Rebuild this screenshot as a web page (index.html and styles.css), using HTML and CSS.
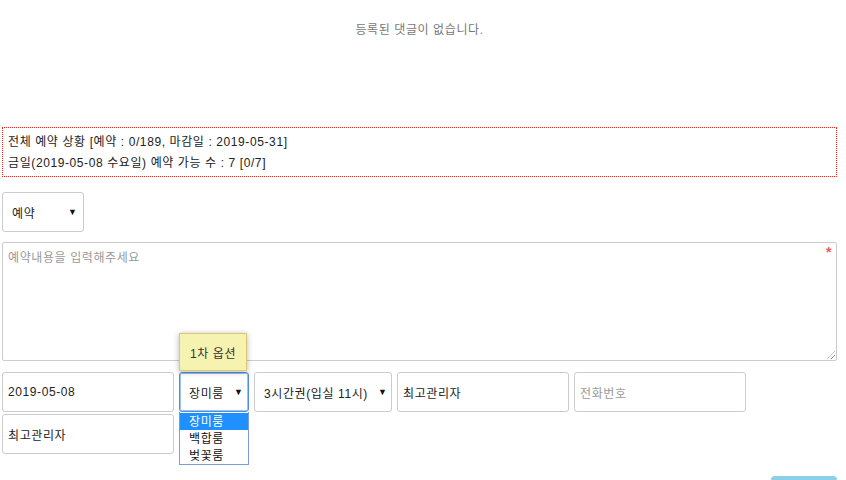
FILE: index.html
```html
<!DOCTYPE html>
<html lang="ko">
<head>
<meta charset="utf-8">
<link rel="stylesheet" href="styles.css">
</head>
<body>
<div class="page">
  <div class="no-comment">등록된 댓글이 없습니다.</div>

  <div class="status">
    <div>전체 예약 상황 [예약 : 0/189, 마감일 : 2019-05-31]</div>
    <div>금일(2019-05-08 수요일) 예약 가능 수 : 7 [0/7]</div>
  </div>

  <div class="sel sel-type"><span>예약</span><i class="arrow">▼</i></div>

  <div class="ta-wrap">
    <div class="textarea">예약내용을 입력해주세요</div>
    <span class="req">*</span>
    <span class="grip"></span>
  </div>

  <div class="fields">
    <div class="inp">2019-05-08</div>
    <div class="room-wrap">
      <div class="sel sel-room focus"><span>장미룸</span><i class="arrow">▼</i></div>
      <div class="tip">1차 옵션</div>
      <ul class="dropdown">
        <li class="on">장미룸</li>
        <li>백합룸</li>
        <li>벚꽃룸</li>
      </ul>
    </div>
    <div class="sel sel-time"><span>3시간권(입실 11시)</span><i class="arrow">▼</i></div>
    <div class="inp">최고관리자</div>
    <div class="inp ph">전화번호</div>
    <div class="inp">최고관리자</div>
  </div>

  <div class="actions"><div class="btn"></div></div>
</div>
</body>
</html>
```
FILE: styles.css
```css
html { overflow: hidden; }
body {
  margin: 0;
  font-family: "Liberation Sans", "Noto Sans CJK KR", sans-serif;
  font-size: 12px;
  letter-spacing: 0.6px;
  color: #222;
  background: #fff;
}
.page { width: 835px; padding: 0 9px 0 2px; }

.no-comment {
  text-align: center;
  color: #777;
  line-height: 16px;
  padding: 22px 0 0 0;
  height: 105px;
}

.status {
  border: 1px dotted #f22;
  padding: 4px 5px 2px 5px;
  line-height: 21px;
  height: 42px;
}

.sel {
  box-sizing: border-box;
  height: 40px;
  border: 1px solid #ccc;
  border-radius: 3px;
  display: flex;
  align-items: center;
  justify-content: space-between;
  background: #fff;
}
.arrow {
  font-style: normal;
  font-size: 9px;
  letter-spacing: 0;
  color: #111;
}
.sel-type {
  width: 82px;
  margin-top: 15px;
  padding: 0 6px 0 9px;
}

.ta-wrap { position: relative; margin-top: 10px; }
.textarea {
  box-sizing: border-box;
  width: 835px;
  height: 119px;
  border: 1px solid #ccc;
  border-radius: 2px;
  padding: 7px 5px;
  line-height: 16px;
  color: #999;
}
.req {
  position: absolute;
  right: 5px;
  top: 2px;
  color: #f55;
  font-size: 14px;
  font-weight: bold;
}
.grip {
  position: absolute;
  right: 2px;
  bottom: 2px;
  width: 8px;
  height: 8px;
  background: repeating-linear-gradient(135deg, transparent 0 2px, #888 2px 3px);
  clip-path: polygon(100% 0, 100% 100%, 0 100%);
}

.fields {
  margin-top: 11px;
  display: flex;
  flex-wrap: wrap;
  column-gap: 5px;
  row-gap: 2px;
}
.inp {
  box-sizing: border-box;
  width: 172px;
  height: 40px;
  border: 1px solid #ccc;
  border-radius: 3px;
  padding: 0 5px;
  display: flex;
  align-items: center;
}
.inp.ph { color: #999; }

.room-wrap { position: relative; }
.sel-room { width: 70px; padding: 0 5px 0 9px; }
.sel-room.focus {
  border-color: #4d8fdb;
  box-shadow: inset 0 0 0 1px #9cc3ee;
}
.sel-time { width: 138px; padding: 0 4px 0 9px; }

.tip {
  position: absolute;
  left: 0;
  top: -39px;
  box-sizing: border-box;
  width: 68px;
  height: 38px;
  background: #f6f3b1;
  border: 1px solid #d9c870;
  box-shadow: 0 1px 6px rgba(0, 0, 0, 0.28);
  display: flex;
  align-items: center;
  justify-content: center;
  color: #333;
}

.dropdown {
  position: absolute;
  left: 0;
  top: 40px;
  width: 70px;
  box-sizing: border-box;
  margin: 0;
  padding: 1px 0 0 0;
  list-style: none;
  background: #fff;
  border: 1px solid #7a9cd6;
  border-top: none;
}
.dropdown li {
  height: 17px;
  line-height: 18px;
  padding-left: 9px;
  color: #111;
}
.dropdown li.on { background: #1e90ff; color: #fff; }

.actions {
  display: flex;
  justify-content: flex-end;
  margin-top: 22px;
}
.btn {
  width: 66px;
  height: 30px;
  background: #8ccfe9;
  border-radius: 4px;
}
```
